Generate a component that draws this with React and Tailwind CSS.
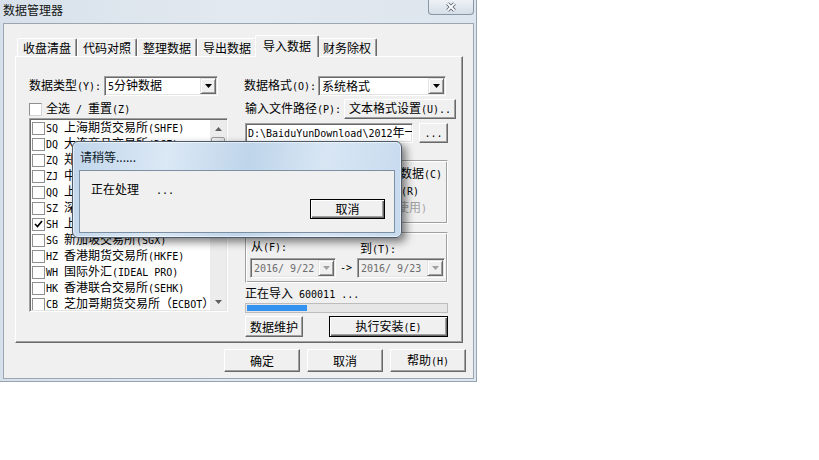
import React from "react";

const markets = [
  ["SQ 上海期货交易所(SHFE)", false],
  ["DQ 大连商品交易所(DCE)", false],
  ["ZQ 郑州商品交易所(CZCE)", false],
  ["ZJ 中国金融期货交易所(CFFEX)", false],
  ["QQ 上海黄金交易所(SGE)", false],
  ["SZ 深圳证券交易所(SZSE)", false],
  ["SH 上海证券交易所(SSE)", true],
  ["SG 新加坡交易所(SGX)", false],
  ["HZ 香港期货交易所(HKFE)", false],
  ["WH 国际外汇(IDEAL PRO)", false],
  ["HK 香港联合交易所(SEHK)", false],
  ["CB 芝加哥期货交易所（ECBOT）", false],
];

const tabs = ["收盘清盘", "代码对照", "整理数据", "导出数据"];

// mixed text: ascii runs in a 6px-wide mono font, like the old SimSun look
const T = ({ s, className = "" }) => (
  <span className={`whitespace-nowrap ${className}`}>
    {s.split(/([\x20-\x7e]+)/).map((part, i) =>
      /^[\x20-\x7e]+$/.test(part) ? (
        <span key={i} className="font-['DejaVu_Sans_Mono',monospace] text-[10px] whitespace-pre">
          {part}
        </span>
      ) : (
        part
      )
    )}
  </span>
);

// classic 3D button
const Btn = ({ children, className = "", isDefault }) => (
  <div
    className={`flex shrink-0 items-center justify-center bg-[#f0f0f0] ${
      isDefault
        ? "border border-black shadow-[inset_1px_1px_0_white,inset_-1px_-1px_0_#696969,inset_-2px_-2px_0_#a0a0a0]"
        : "border border-t-white border-l-white border-r-[#696969] border-b-[#696969] shadow-[inset_-1px_-1px_0_#a0a0a0]"
    } ${className}`}
  >
    {children}
  </div>
);

const DownArrow = ({ color = "#000" }) => (
  <svg width="7" height="4" viewBox="0 0 7 4">
    <path d="M0 0h7L3.5 4z" fill={color} />
  </svg>
);

const Combo = ({ value, className = "", disabled }) => (
  <div
    className={`flex h-[20px] shrink-0 items-center border border-t-[#a0a0a0] border-l-[#a0a0a0] border-r-white border-b-white p-[1px] shadow-[inset_1px_1px_0_#696969,inset_-1px_-1px_0_#e3e3e3] ${
      disabled ? "bg-[#f0f0f0] text-[#6d6d6d]" : "bg-white"
    } ${className}`}
  >
    <span className="flex-1 overflow-hidden pl-[2px]">
      <T s={value} />
    </span>
    <span className="flex h-[16px] w-[16px] items-center justify-center border border-t-[#e3e3e3] border-l-[#e3e3e3] border-r-[#696969] border-b-[#696969] bg-[#f0f0f0] shadow-[inset_1px_1px_0_white,inset_-1px_-1px_0_#a0a0a0]">
      <DownArrow color={disabled ? "#a0a0a0" : "#000"} />
    </span>
  </div>
);

export default function App() {
  return (
    <div className="h-[460px] w-[819px] bg-white font-['Noto_Sans_CJK_SC',sans-serif] text-[12px] leading-[14px] text-black">
      <div className="relative flex h-[382px] w-[477px] flex-col border-r border-b border-[#97a3b1] bg-gradient-to-r from-[#d8e1eb] via-[#e2e9f0] to-[#dde5ee]">

        {/* TITLE BAR */}
        <div className="flex h-[23px] items-start justify-between">
          <span className="pl-[3px] pt-[3px] text-[#151515]">数据管理器</span>
          <div className="mr-[2px] flex h-[15px] w-[46px] items-center justify-center rounded-b-[4px] border border-t-0 border-[#8896a6] bg-gradient-to-b from-[#eef2f6] to-[#d5dde7]">
            <svg width="12" height="10" viewBox="0 0 12 10">
              <path d="M2.5 1.5L9.5 8.5M9.5 1.5L2.5 8.5" stroke="#5d6977" strokeWidth="3.8" />
              <path d="M2.5 1.5L9.5 8.5M9.5 1.5L2.5 8.5" stroke="#ffffff" strokeWidth="1.8" />
            </svg>
          </div>
        </div>

        {/* CLIENT */}
        <div className="mr-[2px] mb-[2px] ml-[3px] flex flex-1 flex-col border border-[#9ba6b3] bg-[#f0f0f0] pt-[11px] pr-[10px] pl-[11px]">

          {/* TABS */}
          <div className="relative z-10 -mb-px flex h-[22px] items-end pl-[2px]">
            {tabs.map((t) => (
              <div
                key={t}
                className="mb-px flex h-[18px] w-[60px] items-center justify-center rounded-t-[2px] border border-b-0 border-t-white border-l-white border-r-[#696969] shadow-[inset_-1px_0_0_#a0a0a0]"
              >
                {t}
              </div>
            ))}
            <div className="relative z-10 -mx-[2px] flex h-[22px] w-[64px] justify-center rounded-t-[2px] border border-b-0 border-t-white border-l-white border-r-[#696969] bg-[#f0f0f0] pt-[3px] shadow-[inset_-1px_0_0_#a0a0a0]">
              导入数据
            </div>
            <div className="mb-px flex h-[18px] w-[60px] items-center justify-center rounded-t-[2px] border border-b-0 border-t-white border-l-white border-r-[#696969] shadow-[inset_-1px_0_0_#a0a0a0]">
              财务除权
            </div>
          </div>

          {/* PANEL */}
          <div className="flex h-[287px] border border-t-white border-l-white border-r-[#696969] border-b-[#696969] pt-[19px] pl-[13px] shadow-[inset_-1px_-1px_0_#a0a0a0]">

            {/* left column */}
            <div className="flex w-[199px] shrink-0 flex-col">
              <div className="flex h-[20px] items-center">
                <T s="数据类型(Y):" className="w-[75px] shrink-0" />
                <Combo value="5分钟数据" className="w-[114px]" />
              </div>

              <div className="mt-[6px] flex h-[14px] items-center">
                <span className="h-[13px] w-[13px] border border-t-[#8f8f8f] border-l-[#8f8f8f] border-r-[#d4d4d4] border-b-[#d4d4d4] bg-white" />
                <T s="全选 / 重置(Z)" className="ml-[4px]" />
              </div>

              <div className="mt-[2px] flex h-[194px] border border-t-[#a0a0a0] border-l-[#a0a0a0] border-r-white border-b-white bg-white p-px shadow-[inset_1px_1px_0_#696969,inset_-1px_-1px_0_#e3e3e3]">
                <div className="flex flex-1 flex-col overflow-hidden">
                  {markets.map(([label, checked]) => (
                    <div key={label} className="flex h-[16px] shrink-0 items-center pl-[1px]">
                      <span className="flex h-[13px] w-[13px] shrink-0 items-center justify-center border border-[#8e8f8f] bg-white">
                        {checked && (
                          <svg width="9" height="8" viewBox="0 0 9 8">
                            <path d="M1 4l2.5 2.5L8 1" stroke="#000" strokeWidth="1.7" fill="none" />
                          </svg>
                        )}
                      </span>
                      <T s={label} className="ml-[1px]" />
                    </div>
                  ))}
                </div>

                {/* scrollbar */}
                <div className="flex w-[16px] shrink-0 flex-col bg-[#ececec]">
                  <div className="flex h-[17px] items-center justify-center">
                    <svg width="7" height="4" viewBox="0 0 7 4">
                      <path d="M0 4h7L3.5 0z" fill="#606060" />
                    </svg>
                  </div>
                  <div className="mx-px h-[88px] rounded-[2px] border border-[#9b9b9b] bg-gradient-to-r from-[#f5f5f5] to-[#e2e2e2]" />
                  <div className="flex-1" />
                  <div className="flex h-[17px] items-center justify-center">
                    <DownArrow color="#606060" />
                  </div>
                </div>
              </div>
            </div>

            {/* right column */}
            <div className="ml-[16px] flex w-[204px] shrink-0 flex-col">
              <div className="flex h-[20px] items-center">
                <T s="数据格式(O):" className="w-[74px] shrink-0" />
                <Combo value="系统格式" className="w-[128px]" />
              </div>

              <div className="mt-[3px] flex h-[20px] items-center pl-[1px]">
                <T s="输入文件路径(P):" className="w-[99px] shrink-0" />
                <Btn className="h-[20px] w-[112px]">
                  <T s="文本格式设置(U).." />
                </Btn>
              </div>

              <div className="mt-[4px] flex h-[20px] items-center pl-[1px]">
                <div className="flex h-[20px] w-[168px] shrink-0 items-center overflow-hidden border border-t-[#a0a0a0] border-l-[#a0a0a0] border-r-white border-b-white bg-white pl-[2px] shadow-[inset_1px_1px_0_#696969,inset_-1px_-1px_0_#e3e3e3]">
                  <T s={"D:\\BaiduYunDownload\\2012年一"} />
                </div>
                <Btn className="ml-[6px] h-[20px] w-[29px]">
                  <T s="..." />
                </Btn>
              </div>

              {/* import options (mostly under the popup) */}
              <div className="mt-[17px] ml-[1px] flex h-[64px] w-[203px] flex-col overflow-hidden border border-t-[#a0a0a0] border-l-[#a0a0a0] border-r-white border-b-white pt-[4px] shadow-[inset_1px_1px_0_white,inset_-1px_-1px_0_#a0a0a0]">
                <div className="flex h-[17px] items-center justify-end pr-[5px]">
                  <T s="覆盖导入全部数据(C)" />
                </div>
                <div className="flex h-[17px] items-center justify-end pr-[28px]">
                  <T s="追加导入(R)" />
                </div>
                <div className="flex h-[17px] items-center justify-end pr-[20px] text-[#a0a0a0]">
                  <T s="增量导入(仅供测试使用)" />
                </div>
              </div>

              {/* date range */}
              <div className="mt-[8px] ml-[1px] flex h-[51px] w-[203px] items-end border border-t-[#a0a0a0] border-l-[#a0a0a0] border-r-white border-b-white pb-[4px] pl-[4px] shadow-[inset_1px_1px_0_white,inset_-1px_-1px_0_#a0a0a0]">
                <div className="flex flex-col">
                  <T s="从(F):" className="mb-[3px] pl-px" />
                  <Combo value="2016/ 9/22" className="w-[86px]" disabled />
                </div>
                <T s="->" className="mb-[3px] ml-[4px] w-[13px]" />
                <div className="ml-[4px] flex flex-col">
                  <T s="到(T):" className="mb-px pl-[3px]" />
                  <Combo value="2016/ 9/23" className="w-[88px]" disabled />
                </div>
              </div>

              <div className="mt-[3px] h-[14px] pl-[1px]">
                <T s="正在导入 600011 ..." />
              </div>

              <div className="mt-[3px] ml-[1px] h-[10px] w-[203px] border border-[#bcbcbc] bg-[#e6e6e6] p-px">
                <div className="h-full w-[60px] bg-[#3391ef]" />
              </div>

              <div className="mt-[3px] flex h-[21px] pl-[1px]">
                <Btn className="h-[21px] w-[58px]">数据维护</Btn>
                <Btn isDefault className="ml-auto h-[21px] w-[119px]">
                  <T s="执行安装(E)" />
                </Btn>
              </div>
            </div>
          </div>

          {/* BOTTOM BUTTONS */}
          <div className="mt-[6px] -mr-[3px] flex justify-end gap-[7px]">
            <Btn className="h-[23px] w-[76px]">确定</Btn>
            <Btn className="h-[23px] w-[76px]">取消</Btn>
            <Btn className="h-[23px] w-[76px]">
              <T s="帮助(H)" />
            </Btn>
          </div>
        </div>

        {/* PLEASE WAIT POPUP */}
        <div className="absolute top-[141px] left-[72px] z-20 flex h-[97px] w-[330px] flex-col rounded-[6px] border border-[#4e5b6a] bg-[linear-gradient(100deg,#c1d6eb_0%,#dbe8f5_28%,#bfd5ea_52%,#d8e6f4_74%,#c6daee_100%)] px-[6px] pb-[4px] shadow-[inset_0_0_0_1px_rgba(255,255,255,0.55),4px_4px_8px_rgba(0,0,0,0.5)]">
          <div className="h-[28px] pt-[8px] pl-px text-[#0f1b2a]">请稍等......</div>
          <div className="flex flex-1 flex-col border border-[#7d8fa3] bg-[#f0f0f0] pt-[11px] pr-[9px] pl-[11px]">
            <div className="flex h-[14px]">
              <span>正在处理</span>
              <T s="..." className="ml-[17px]" />
            </div>
            <div className="mt-[3px] flex justify-end">
              <Btn isDefault className="h-[20px] w-[75px]">取消</Btn>
            </div>
          </div>
        </div>
      </div>
    </div>
  );
}
